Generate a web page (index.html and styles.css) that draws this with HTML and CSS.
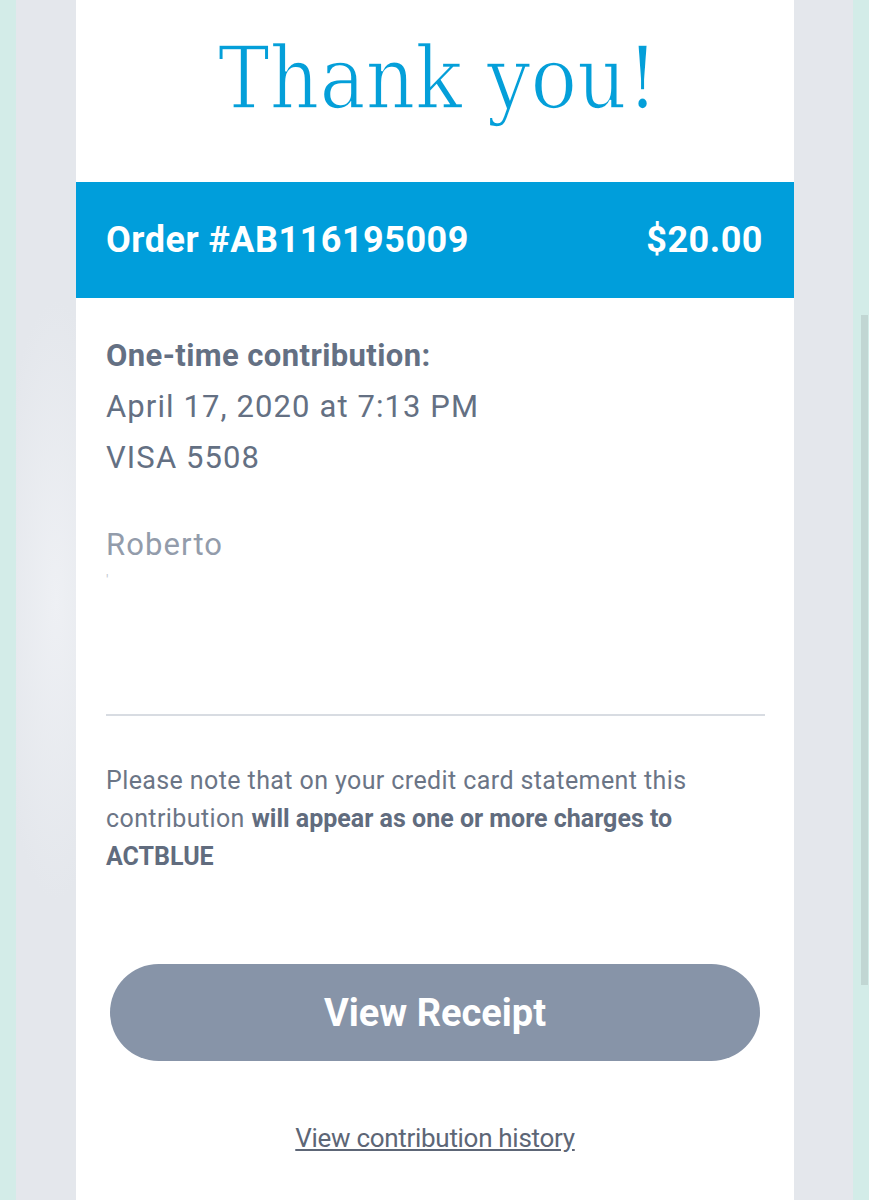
FILE: index.html
```html
<!DOCTYPE html>
<html lang="en">
<head>
    <meta charset="UTF-8">
    <meta name="viewport" content="width=device-width, initial-scale=1.0">
    <title>Thank you!</title>
    <link rel="stylesheet" href="styles.css">
</head>
<body>

    <div class="frame">
        <div class="card">
            <h1 class="title">Thank you!</h1>

            <div class="order-bar">
                <span>Order #AB116195009</span>
                <span>$20.00</span>
            </div>

            <div class="details">
                <p class="label">One-time contribution:</p>
                <p>April 17, 2020 at 7:13 PM</p>
                <p>VISA 5508</p>
                <p class="donor">Roberto</p>
                <p class="donor-line">'</p>
            </div>

            <hr class="divider">

            <p class="note">
                Please note that on your credit card statement this contribution
                <strong>will appear as one or more charges to ACTBLUE</strong>
            </p>

            <button class="button">View Receipt</button>

            <a href="#" class="history-link">View contribution history</a>
        </div>
    </div>

    <div class="scroll-thumb"></div>

</body>
</html>
```

FILE: styles.css
```css
* {
    margin: 0;
    padding: 0;
    box-sizing: border-box;
}

body {
    background: #d3ece8;
    font-family: Roboto, 'Liberation Sans', sans-serif;
    overflow: hidden;
}

.frame {
    margin: 0 16px;
    min-height: 1200px;
    padding: 0 59px 0 60px;
    background: radial-gradient(ellipse 60px 300px at 40px 600px, #eef0f4, #e4e7ec);
}

.card {
    background: white;
    min-height: 1200px;
    display: flex;
    flex-direction: column;
}

.title {
    height: 182px;
    padding: 23px 0 0 6px;
    text-align: center;
    color: #049fd9;
    font-family: 'DejaVu Serif', serif;
    font-stretch: condensed;
    font-weight: normal;
    font-size: 86px;
    line-height: 110px;
    -webkit-text-stroke: 1.6px white;
}

.order-bar {
    height: 116px;
    background: #009edb;
    color: white;
    display: flex;
    justify-content: space-between;
    align-items: center;
    padding: 0 31px 0 30px;
    font-size: 36px;
    font-weight: bold;
    letter-spacing: 0.5px;
}

.details {
    padding: 32px 30px 0;
    color: #647083;
    font-size: 31px;
    letter-spacing: 1.1px;
    line-height: 51px;
    height: 416px;
}

.details .label {
    font-weight: bold;
    letter-spacing: 0.4px;
}

.details .donor {
    margin-top: 36px;
    color: #939cab;
}

.details .donor-line {
    color: #c3c8d0;
    font-size: 14px;
    line-height: 20px;
}

.divider {
    border: none;
    border-top: 2px solid #d8dce2;
    margin: 0 29px 0 30px;
}

.note {
    padding: 46px 30px 0;
    color: #6b7586;
    font-size: 25px;
    line-height: 38px;
    letter-spacing: 0.4px;
}

.note strong {
    color: #616c7e;
    letter-spacing: 0;
}

.button {
    margin: 88px 34px 0;
    height: 97px;
    border: none;
    border-radius: 49px;
    background: #8794a8;
    color: white;
    font-family: Roboto, 'Liberation Sans', sans-serif;
    font-size: 38px;
    font-weight: bold;
    cursor: pointer;
}

.history-link {
    align-self: center;
    margin-top: 62px;
    color: #5d6676;
    font-size: 26px;
    letter-spacing: -0.3px;
}

.scroll-thumb {
    position: absolute;
    top: 315px;
    right: 1px;
    width: 7px;
    height: 670px;
    background: #c1d6d3;
}
```
